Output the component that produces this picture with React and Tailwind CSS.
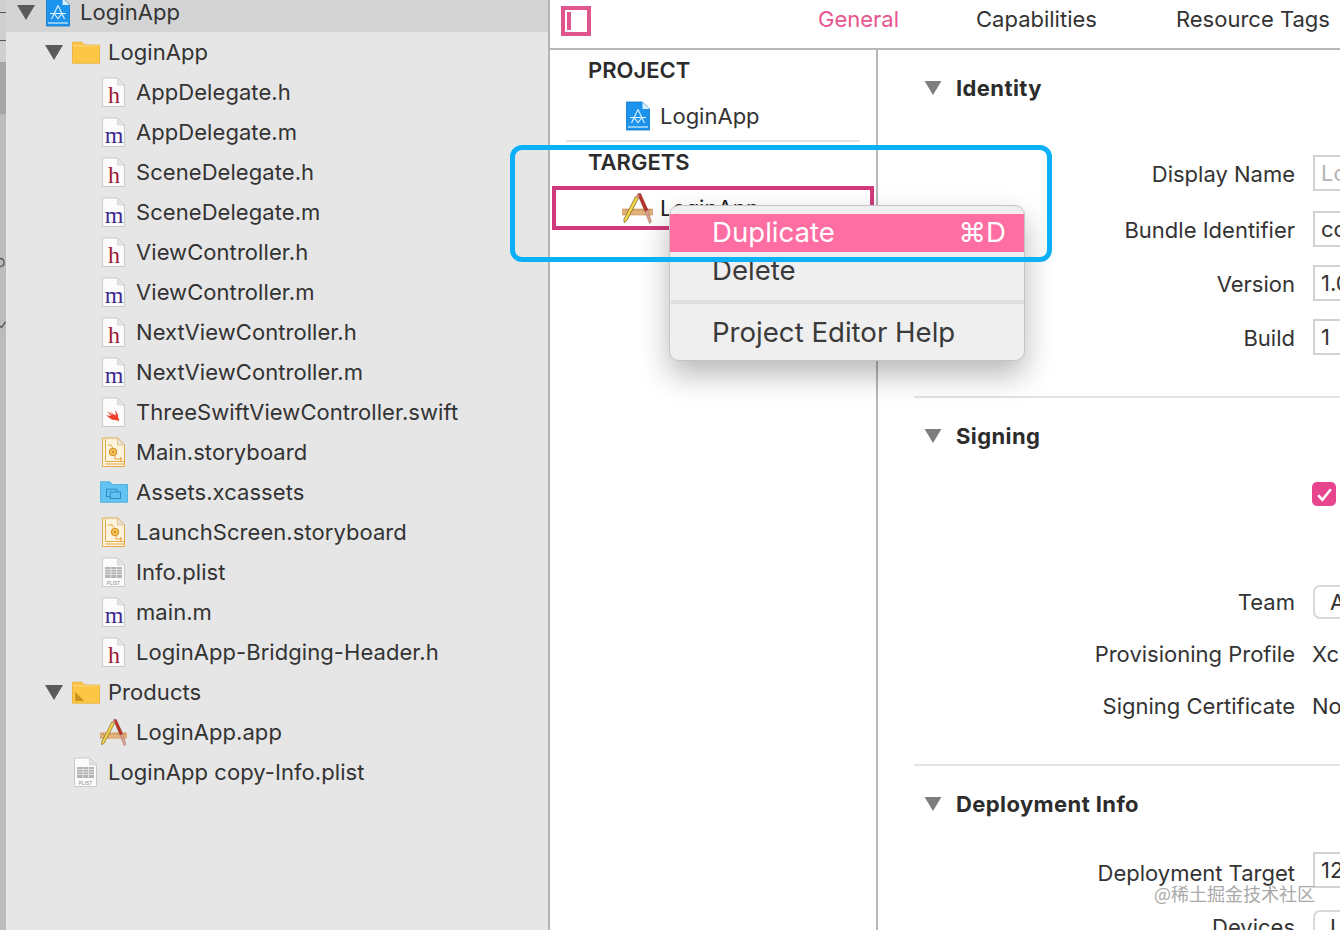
const FONT = "font-['Inter','Liberation_Sans',sans-serif]";

function Doc({ children, fill = "#fbfbfb", stroke = "#c9c9c9" }) {
  return (
    <svg width="24" height="31" viewBox="0 0 24 31" className="block">
      <path d="M.5 1h15l7 7v21.500H.5z" fill={fill} stroke={stroke} strokeWidth="1" />
      <path d="M15.500 1v7h7z" fill="#e4e4e4" stroke={stroke} strokeWidth="0.6" />
      {children}
    </svg>
  );
}

const H = () => (
  <Doc>
    <text x="12" y="25.500" textAnchor="middle" fontSize="24" fill="#a01c38" className="font-['Liberation_Serif']">h</text>
  </Doc>
);
const M = () => (
  <Doc>
    <text x="12" y="25.500" textAnchor="middle" fontSize="24" fill="#3b2a8e" className="font-['Liberation_Serif']">m</text>
  </Doc>
);
const Swift = () => (
  <Doc>
    <path d="M4 18c3 3 6 5 8.500 5 2 0 3 .5 4 1.500.8-1.500.5-3-.5-4.200.5-2.300-.8-5-3.300-7.300 1.100 2.200 1.400 4.200.8 5.400-2.500-1.400-4.800-3.400-6.500-5.400 1.300 2 2.800 3.600 4.200 4.800-1.800-.6-4.300-2-6.200-3.500 1.300 1.800 2.800 3.200 4.200 4.200-1.700.3-3.500.3-5.200-.5z" fill="#f0402c" />
  </Doc>
);
const Storyboard = ({ flip }) => (
  <Doc fill="#fdf3dc" stroke="#e3a94b">
    <path d="M3.500 2v22.500h19" fill="none" stroke="#e3a94b" strokeWidth="1" />
    <path d="M3.500 27h19" stroke="#e3a94b" strokeWidth="1" />
    <circle cx={flip ? 13 : 11} cy="15" r="3.500" fill="#f4c95f" stroke="#d98f22" strokeWidth="1.200" />
    <circle cx={flip ? 13 : 11} cy="15" r="1.200" fill="#d98f22" />
    <path d={flip ? "M6 8h4l3 3.500M14 19v3h6m-2-2l2 2-2 2" : "M6 8h3l2 3.500M13 19v3h7m-2-2l2 2-2 2"} fill="none" stroke="#d98f22" strokeWidth="0.800" />
  </Doc>
);
const Plist = () => (
  <Doc>
    <rect x="3" y="10" width="17" height="11" fill="#b4b4b4" />
    <path d="M3 12.500h17M3 15h17M3 17.500h17M9 10v11M14.500 10v11" stroke="#f0f0f0" strokeWidth="0.700" />
    <text x="11.500" y="28" textAnchor="middle" fontSize="4.800" fill="#888" className="font-['Liberation_Sans']">PLIST</text>
  </Doc>
);
const Folder = ({ products }) => (
  <svg width="30" height="25" viewBox="0 0 30 25" className="block">
    <path d="M.5 24V1.500h10l3 3h16V24z" fill="#fdc644" stroke="#e7a92c" strokeWidth="0.800" />
    <path d="M1 5.500h28" stroke="#fbdc86" strokeWidth="1" />
    {products && <path d="M3.500 12v9.500h9.500z" fill="#c8901c" />}
  </svg>
);
const Assets = () => (
  <svg width="30" height="24" viewBox="0 0 30 24" className="block">
    <path d="M.5 23V1h10l3 3h16v19z" fill="#62c3f2" stroke="#3ea5da" strokeWidth="0.800" />
    <rect x="7" y="9" width="11" height="8" fill="none" stroke="#2b86c4" strokeWidth="1" />
    <rect x="11" y="12" width="11" height="7" fill="#62c3f2" stroke="#2b86c4" strokeWidth="1" />
  </svg>
);
const AppDoc = () => (
  <svg width="24" height="30" viewBox="0 0 24 30" className="block">
    <path d="M.5 1h16l7 7v21H.5z" fill="#1c93ec" stroke="#0e74c8" strokeWidth="0.800" />
    <path d="M16.500 1v7h7z" fill="#d8eefc" />
    <path d="M2 26h20" stroke="#ffffff" strokeWidth="1" />
    <path d="M12 8.500L5.500 22M12 8.500L18.500 22M4 16.500h16M8 16.500l4 5 4-5" fill="none" stroke="#e5f4ff" strokeWidth="1.100" />
  </svg>
);
const Hammer = () => (
  <svg width="32" height="31" viewBox="0 0 32 31" className="block">
    <rect x="0.500" y="16" width="30" height="6" fill="#e2b27a" stroke="#c98f55" strokeWidth="0.600" />
    <path d="M4 16v2M8 16v2M12 16v2M16 16v2M20 16v2M24 16v2M28 16v2" stroke="#9c6c3c" strokeWidth="0.600" />
    <path d="M15.500 1l3-.5L26 17l-3 1.500z" fill="#b8342a" stroke="#7c2318" strokeWidth="0.500" />
    <path d="M23 18.500l3-1.500 3.500 12-2 1.500z" fill="#dba08e" stroke="#8a5a4c" strokeWidth="0.400" />
    <path d="M13.500 3.500L1.800 26.500l.4 3 2.600-1.800L16.500 5z" fill="#f4d54a" stroke="#6e5a18" strokeWidth="0.700" />
    <path d="M13.500 3.500l3 1.500 1-2-2-2z" fill="#d98f8a" />
  </svg>
);

const rows = [
  { text: 80, arrow: true, icon: <AppDoc />, label: "LoginApp", top: true },
  { text: 108, arrow: true, icon: <Folder />, label: "LoginApp" },
  { text: 136, icon: <H />, label: "AppDelegate.h" },
  { text: 136, icon: <M />, label: "AppDelegate.m" },
  { text: 136, icon: <H />, label: "SceneDelegate.h" },
  { text: 136, icon: <M />, label: "SceneDelegate.m" },
  { text: 136, icon: <H />, label: "ViewController.h" },
  { text: 136, icon: <M />, label: "ViewController.m" },
  { text: 136, icon: <H />, label: "NextViewController.h" },
  { text: 136, icon: <M />, label: "NextViewController.m" },
  { text: 136, icon: <Swift />, label: "ThreeSwiftViewController.swift" },
  { text: 136, icon: <Storyboard />, label: "Main.storyboard" },
  { text: 136, icon: <Assets />, label: "Assets.xcassets" },
  { text: 136, icon: <Storyboard flip />, label: "LaunchScreen.storyboard" },
  { text: 136, icon: <Plist />, label: "Info.plist" },
  { text: 136, icon: <M />, label: "main.m" },
  { text: 136, icon: <H />, label: "LoginApp-Bridging-Header.h" },
  { text: 108, arrow: true, icon: <Folder products />, label: "Products" },
  { text: 136, icon: <Hammer />, label: "LoginApp.app" },
  { text: 108, icon: <Plist />, label: "LoginApp copy-Info.plist" },
];

const Arrow = ({ color = "#5a5a5a", w = 18, h = 15 }) => (
  <svg width={w} height={h} viewBox="0 0 18 15" className="block">
    <path d="M0 0h18L9 15z" fill={color} />
  </svg>
);

function TreeRow({ r }) {
  return (
    <div
      className={`flex h-10 items-center ${r.top ? "bg-[#d5d4d5]" : ""}`}
      style={{ paddingLeft: r.text - 70 }}
    >
      <div className="ml-px flex w-[27px] shrink-0 justify-start">{r.arrow && <Arrow />}</div>
      <div className="flex w-[36px] shrink-0 justify-center pr-[8px]">{r.icon}</div>
      <span className="whitespace-nowrap text-[22px] leading-none tracking-[0.06px] text-[#333333]">{r.label}</span>
    </div>
  );
}

function Sidebar() {
  return (
    <div className="flex h-full shrink-0">
      <div className="relative flex w-[6px] flex-col overflow-hidden">
        <div className="flex h-[62px] flex-col bg-[#cfcfcf] pt-[12px]">
          <div className="h-px bg-[#555555]" />
          <div className="mt-[27px] h-px bg-[#555555]" />
        </div>
        <div className="h-[52px] bg-[#a6a6a6]" />
        <div className="flex-1 bg-[#bcbcbc]" />
        <svg width="6" height="80" viewBox="0 0 6 80" className="absolute left-0 top-[257px]">
          <path d="M0 1.500c3 0 4 2 4 4s-1 4-4 4" fill="none" stroke="#555" strokeWidth="1.300" />
          <path d="M0 69l1.500 1.500L5.500 65" fill="none" stroke="#555" strokeWidth="1.300" />
        </svg>
      </div>
      <div className="h-full w-[544px] border-r-2 border-[#b5b5b5] bg-[#e6e6e6]">
        <div className="-mt-2">
          {rows.map((r, i) => (
            <TreeRow key={i} r={r} />
          ))}
        </div>
      </div>
    </div>
  );
}

function TopBar() {
  return (
    <div className="flex h-[50px] shrink-0 border-b-2 border-[#b8b8b8] bg-white">
      <div className="ml-[11px] mt-[6px] flex h-[30px] w-[30px] border-4 border-[#e0568f] pl-[2px] pt-[2px]">
        <div className="h-[18px] w-[4px] bg-[#e0568f]" />
      </div>
      <div className="ml-[227px] flex h-[38px] items-center whitespace-nowrap text-[22px] leading-none">
        <span className="text-[#e8558f]">General</span>
        <span className="ml-[77px] text-[#333333]">Capabilities</span>
        <span className="ml-[79px] text-[#333333]">Resource Tags</span>
      </div>
    </div>
  );
}

function Targets() {
  return (
    <div className="w-[328px] shrink-0 border-r-2 border-[#b8b8b8] bg-white">
      <div className="pl-[38px] pt-[7px] text-[22px] font-semibold leading-[26px] text-[#2c2c2c]">PROJECT</div>
      <div className="mt-[15px] flex h-[36px] items-center pl-[76px]">
        <AppDoc />
        <span className="ml-[10px] text-[22px] leading-none text-[#333333]">LoginApp</span>
      </div>
      <div className="ml-[16px] mt-[6px] h-[2px] w-[294px] bg-[#e2e2e2]" />
      <div className="mt-[7px] pl-[38px] text-[22px] font-semibold leading-[26px] text-[#2c2c2c]">TARGETS</div>
      <div className="ml-[2px] mt-[11px] flex h-[44px] w-[322px] items-center border-4 border-[#d03a7c] pl-[66px]">
        <Hammer />
        <span className="ml-[6px] text-[22px] leading-none text-[#222222]">LoginApp</span>
      </div>
    </div>
  );
}

function Field({ children, muted }) {
  return (
    <div className={`flex h-[36px] w-[80px] shrink-0 items-center border-2 border-[#d2d2d2] pl-[6px] text-[22px] leading-none ${muted ? "text-[#b4b4b4]" : "text-[#333333]"}`}>
      {children}
    </div>
  );
}
function Dropdown({ children }) {
  return (
    <div className="flex h-[34px] w-[80px] shrink-0 items-center rounded-[7px] border-2 border-[#d8d8d8] pl-[15px] text-[22px] leading-none text-[#333333]">
      {children}
    </div>
  );
}
function FormRow({ label, className = "", labelClass = "pt-[2px]", children }) {
  return (
    <div className={`flex items-center ${className}`}>
      <div className={`w-[417px] shrink-0 whitespace-nowrap text-right text-[22px] leading-none text-[#333333] ${labelClass}`}>{label}</div>
      <div className="ml-[18px] flex">{children}</div>
    </div>
  );
}
function SectionHead({ title, className = "" }) {
  return (
    <div className={`flex h-[36px] items-center pl-[46px] ${className}`}>
      <Arrow color="#7d7d7d" w={18} h={14} />
      <span className="ml-[14px] text-[22px] font-bold leading-none tracking-[0.4px] text-[#2c2c2c]">{title}</span>
    </div>
  );
}
const Divider = ({ className = "" }) => <div className={`ml-[36px] h-[2px] bg-[#e4e4e4] ${className}`} />;

function Details() {
  return (
    <div className="min-w-0 flex-1 overflow-hidden bg-white">
      <SectionHead title="Identity" className="mt-[20px]" />
      <FormRow label="Display Name" className="mt-[49px]"><Field muted>Lo</Field></FormRow>
      <FormRow label="Bundle Identifier" className="mt-[20px]"><Field>com</Field></FormRow>
      <FormRow label="Version" className="mt-[18px]"><Field>1.0</Field></FormRow>
      <FormRow label="Build" className="mt-[18px]"><Field>1</Field></FormRow>
      <Divider className="mt-[41px]" />
      <SectionHead title="Signing" className="mt-[20px]" />
      <div className="ml-[434px] mt-[28px] flex h-[24px] w-[24px] items-center justify-center rounded-[5px] bg-[#e8458f]">
        <svg width="17" height="15" viewBox="0 0 16 14"><path d="M2 7.500l4 4.500 8-10" fill="none" stroke="#fff" strokeWidth="2.400" /></svg>
      </div>
      <FormRow label="Team" labelClass="" className="mt-[79px]"><Dropdown>Automatically</Dropdown></FormRow>
      <FormRow label="Provisioning Profile" labelClass="" className="mt-[18px] h-[34px]"><span className="-ml-px text-[22px] leading-none text-[#333333]">Xcode</span></FormRow>
      <FormRow label="Signing Certificate" labelClass="" className="mt-[18px] h-[34px]"><span className="-ml-px text-[22px] leading-none text-[#333333]">None</span></FormRow>
      <Divider className="mt-[41px]" />
      <SectionHead title="Deployment Info" className="mt-[20px]" />
      <FormRow label="Deployment Target" labelClass="pt-[6px]" className="mt-[30px]"><Field>12.0</Field></FormRow>
      <FormRow label="Devices" labelClass="pt-0" className="mt-[22px]"><Dropdown>Universal</Dropdown></FormRow>
    </div>
  );
}

function ContextMenu() {
  return (
    <div className="absolute left-[669px] top-[205px] h-[156px] w-[356px] rounded-[10px] border border-[#c4c4c4] bg-[#efefef] pt-[8px] text-[27.6px] leading-none text-[#3a3a3a] shadow-[0_14px_30px_rgba(0,0,0,0.28)]">
      <div className="flex h-[38px] items-center justify-between bg-[#fe6ea3] pl-[42px] pr-[18px] text-white">
        <span>Duplicate</span>
        <span>⌘D</span>
      </div>
      <div className="flex h-[38px] items-center pl-[42px]">Delete</div>
      <div className="ml-[1px] mt-[10px] h-[4px] bg-[#e0e0e0]" />
      <div className="flex h-[56px] items-center pl-[42px] pt-[2px]">Project Editor Help</div>
    </div>
  );
}

export default function App() {
  return (
    <div className={`relative flex h-[930px] w-[1340px] overflow-hidden bg-white ${FONT}`}>
      <Sidebar />
      <div className="flex min-w-0 flex-1 flex-col">
        <TopBar />
        <div className="flex min-h-0 flex-1">
          <Targets />
          <Details />
        </div>
      </div>
      <ContextMenu />
      <div className="absolute left-[510px] top-[145px] h-[117px] w-[542px] rounded-[12px] border-[5px] border-[#0bb0f8]" />
      <div className="absolute left-[1154px] top-[882px] whitespace-nowrap font-['Noto_Sans_CJK_SC',sans-serif] text-[18px] leading-[22px] text-[#a9a9a9]">@稀土掘金技术社区</div>
    </div>
  );
}
